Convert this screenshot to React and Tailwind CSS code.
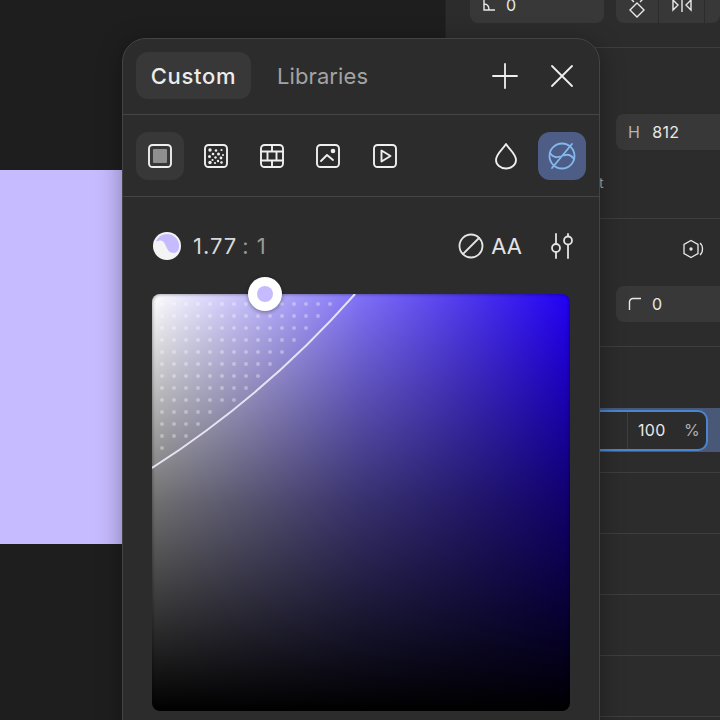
import React from 'react';

const FONT = { fontFamily: 'Inter, "Noto Sans", sans-serif' };

// quadratic contrast curve inside the colour field
const P0 = [0, 174];
const C = [114, 101];
const P2 = [203, 0];
const curveY = (x) => {
  let best = 0;
  let dist = 1e9;
  for (let t = 0; t <= 1; t += 0.005) {
    const cx = (1 - t) * (1 - t) * P0[0] + 2 * t * (1 - t) * C[0] + t * t * P2[0];
    const d = Math.abs(cx - x);
    if (d < dist) {
      dist = d;
      best = (1 - t) * (1 - t) * P0[1] + 2 * t * (1 - t) * C[1] + t * t * P2[1];
    }
  }
  return best;
};

const dots = [];
for (let y = 10; y < 170; y += 12) {
  for (let x = 10; x < 200; x += 12) {
    if (y < curveY(x) - 8) dots.push([x, y]);
  }
}

const Ico = ({ children, size = 24, vb = 24, stroke = '#efefef', width = 1.9 }) => (
  <svg width={size} height={size} viewBox={`0 0 ${vb} ${vb}`} fill="none" stroke={stroke} strokeWidth={width} strokeLinecap="round" strokeLinejoin="round">
    {children}
  </svg>
);

const ToolButton = ({ children, active }) => (
  <div className={`flex h-12 w-12 items-center justify-center rounded-xl ${active ? 'bg-[#383838]' : ''}`}>{children}</div>
);

const PropertyPanel = () => (
  <div className="flex h-[720px] w-[275px] shrink-0 flex-col border-l border-[#242424] bg-[#2c2c2c] text-[16px] tracking-[0.3px] text-[#e8e8e8]">
    <div className="flex h-[48px] shrink-0 gap-3 border-b border-[#3e3e3e] pl-[24px]">
      <div className="-mt-[13px] flex h-9 w-[134px] items-center gap-[9px] rounded-lg bg-[#383838] pl-3">
        <svg width="15" height="15" viewBox="0 0 15 15" fill="none" stroke="#e8e8e8" strokeWidth="1.4"><path d="M2 1v11h11M2 6c3 0 5 2 5 6" /></svg>
        <span>0</span>
      </div>
      <div className="-mt-[13px] flex h-9 flex-1 rounded-lg bg-[#383838]">
        <div className="flex w-[43px] items-center justify-center border-r border-[#2c2c2c] pt-1">
          <svg width="18" height="26" viewBox="0 0 18 26" fill="none" stroke="#e8e8e8" strokeWidth="1.4"><path d="M9 9l7 7-7 7-7-7zM3 5l3 3M15 5l-3 3" /></svg>
        </div>
        <div className="flex w-[46px] items-center justify-center border-r border-[#2c2c2c]">
          <svg width="20" height="16" viewBox="0 0 20 16" fill="none" stroke="#e8e8e8" strokeWidth="1.4"><path d="M10 1v14M1 3l5 5-5 5zM19 3l-5 5 5 5z" /></svg>
        </div>
      </div>
    </div>
    <div className="relative flex h-[171px] shrink-0 flex-col border-b border-[#3e3e3e] pl-[170px] pt-[66px]">
      <div className="flex h-9 w-[104px] items-center gap-[12px] rounded-l-lg bg-[#383838] pl-3">
        <span className="text-[#b4b4b4]">H</span>
        <span>812</span>
      </div>
      <div className="mt-[22px] -ml-[62px] w-[50px] text-right text-[14px] text-[#a8a8a8]">Hug t</div>
    </div>
    <div className="flex h-[128px] shrink-0 flex-col border-b border-[#3e3e3e] pl-[170px] pt-[19px]">
      <div className="flex h-6 justify-end pr-[15px]">
        <svg width="24" height="24" viewBox="0 0 24 24" fill="none" stroke="#e8e8e8" strokeWidth="1.3">
          <path d="M10 2.500l7 4v9l-7 4-7-4v-9z" />
          <circle cx="10" cy="11" r="1" fill="#e8e8e8" />
          <path d="M19 5c2 1.500 2.500 3.500 2.500 6s-.5 4.500-2.500 6" />
        </svg>
      </div>
      <div className="mt-[24px] flex h-9 w-[104px] items-center gap-[10px] rounded-l-lg bg-[#383838] pl-3">
        <svg width="14" height="14" viewBox="0 0 14 14" fill="none" stroke="#e8e8e8" strokeWidth="1.4"><path d="M1.500 13V5a3.500 3.500 0 0 1 3.500-3.500h8" /></svg>
        <span>0</span>
      </div>
    </div>
    <div className="flex h-[126px] shrink-0 flex-col border-b border-[#3e3e3e] pt-[61px]">
      <div className="flex h-11 items-center bg-[#4a5878] pr-3">
        <div className="flex h-[41px] flex-1 items-center rounded-r-[10px] border-2 border-[#4a86d0] bg-[#2c2c2c]">
          <div className="w-[180px] self-stretch border-r border-[#3e3e3e]" />
          <span className="ml-[10px] w-[47px]">100</span>
          <span className="-ml-px text-[#b0b0b0]">%</span>
        </div>
      </div>
    </div>
    <div className="h-[61px] shrink-0 border-b border-[#3e3e3e]" />
    <div className="h-[61px] shrink-0 border-b border-[#3e3e3e]" />
    <div className="h-[61px] shrink-0 border-b border-[#3e3e3e]" />
    <div className="h-[61px] shrink-0 border-b border-[#3e3e3e]" />
  </div>
);

const ColorPicker = () => (
  <div className="absolute left-[122px] top-[38px] flex h-[700px] w-[478px] flex-col rounded-t-[24px] border border-[#444] bg-[#2c2c2c] shadow-[0_4px_24px_rgba(0,0,0,0.35)]">
    <div className="flex h-[76px] shrink-0 items-center border-b border-[#454545] pb-[2px] pl-[13px] pr-[25px]">
      <div className="flex h-[47px] w-[115px] items-center justify-center rounded-xl bg-[#383838] text-[22px] font-medium leading-none tracking-[0.7px] text-[#ececec]">Custom</div>
      <div className="ml-[26px] text-[22px] leading-none tracking-[0.1px] text-[#a3a3a3]">Libraries</div>
      <div className="ml-auto flex items-center gap-[32px]">
        <Ico size={26} vb={26} width={1.8}><path d="M13 1v24M1 13h24" /></Ico>
        <Ico size={24} width={1.8}><path d="M2 2l20 20M22 2L2 22" /></Ico>
      </div>
    </div>
    <div className="flex h-[82px] shrink-0 items-center gap-[8px] border-b border-[#454545] pl-[13px] pr-[13px]">
      <ToolButton active>
        <Ico>
          <rect x="1" y="1" width="22" height="22" rx="3.500" />
          <rect x="5" y="5" width="14" height="14" rx="1" fill="#8f8f8f" stroke="none" />
        </Ico>
      </ToolButton>
      <ToolButton>
        <Ico>
          <rect x="1" y="1" width="22" height="22" rx="3.500" />
          <g fill="#efefef" stroke="none">
            <circle cx="6" cy="6" r="1.700" /><circle cx="12" cy="6.500" r="1.300" /><circle cx="17.500" cy="6" r="1.100" />
            <circle cx="9" cy="10" r="1.300" /><circle cx="14.500" cy="10" r="1.500" /><circle cx="19" cy="11" r="1" />
            <circle cx="5.500" cy="12.500" r="1.500" /><circle cx="11.500" cy="13.500" r="1.200" /><circle cx="17" cy="14" r="1.400" />
            <circle cx="8.500" cy="16" r="1.100" /><circle cx="14" cy="17" r="1.200" />
            <circle cx="6" cy="18.500" r="1.700" /><circle cx="11" cy="19" r="1.100" /><circle cx="17.500" cy="18.500" r="1.300" />
          </g>
        </Ico>
      </ToolButton>
      <ToolButton>
        <Ico>
          <rect x="1" y="1" width="22" height="22" rx="3.500" />
          <path d="M1 7.500h22M1 16.500h22M7.500 7.500v9M16.500 7.500v9M12 1v6.500M12 16.500V23" />
        </Ico>
      </ToolButton>
      <ToolButton>
        <Ico>
          <rect x="1" y="1" width="22" height="22" rx="3.500" />
          <path d="M5 17l6-6 6 5" />
          <circle cx="17" cy="7" r="2.300" fill="#efefef" stroke="none" />
        </Ico>
      </ToolButton>
      <div className="ml-px">
        <ToolButton>
          <Ico>
            <rect x="1" y="1" width="22" height="22" rx="3.500" />
            <path d="M8.500 6.500v11l9-5.500z" />
          </Ico>
        </ToolButton>
      </div>
      <div className="ml-auto flex items-center gap-[8px]">
        <ToolButton>
          <Ico size={28} vb={28} width={1.8}>
            <path d="M14 2C11 7 4 12 4 18a10 8.500 0 0 0 20 0c0-6-7-11-10-16z" />
          </Ico>
        </ToolButton>
        <div className="flex h-12 w-12 items-center justify-center rounded-xl bg-[#4d5d85]">
          <Ico size={30} vb={30} stroke="#84b8ee" width={1.8}>
            <circle cx="15" cy="15" r="12.500" />
            <path d="M3 12c2.500 3.500 6.500 5 10 3.500M27 18c-2.500-3.500-6.500-5-10-3.500M5 27L25 3" />
          </Ico>
        </div>
      </div>
    </div>
    <div className="flex h-[97px] shrink-0 items-start pl-[29px] pr-[24px] pt-[34px]">
      <svg width="30" height="30" viewBox="0 0 30 30">
        <circle cx="15" cy="15" r="14" fill="#f4f4f4" />
        <path d="M5 10.500C7 9 10 9 12 11.500C14 14 15 20 19 21.500C21.500 22.500 24 22 26 20A12 12 0 0 0 4 10z" fill="#c7bbff" />
      </svg>
      <div className="ml-[11px] flex h-[30px] items-center text-[22px] leading-none tracking-[1px] text-[#d9d9d9]">
        1.77<span className="ml-[5px] text-[#9a9a9a]">: 1</span>
      </div>
      <div className="ml-auto flex h-[30px] items-center">
        <Ico size={26} vb={26} stroke="#e4e4e4" width={1.8}><circle cx="13" cy="13" r="11.500" /><path d="M5 21L21 5" /></Ico>
        <span className="ml-[7px] text-[22px] leading-none text-[#e4e4e4]">AA</span>
        <div className="ml-[27px]">
          <Ico size={26} vb={26} stroke="#e4e4e4" width={1.8}>
            <path d="M7 1v9M7 19v6M19 1v2M19 12v13" />
            <circle cx="7" cy="15" r="4" />
            <circle cx="19" cy="7.500" r="4" />
          </Ico>
        </div>
      </div>
    </div>
    <div className="relative ml-[29px] h-[417px] w-[418px] shrink-0 rounded-lg bg-[linear-gradient(to_bottom,transparent,rgba(0,0,0,0.56)_50%,#000),linear-gradient(to_right,#fff,#7f70f8_50%,#4f38ee_75%,#2200f5)] shadow-[inset_0_0_3px_1px_rgba(0,0,0,0.3)]">
      <svg className="absolute inset-0" width="418" height="417" viewBox="0 0 418 417" fill="none">
        {dots.map(([x, y]) => (
          <circle key={`${x}-${y}`} cx={x} cy={y} r="2" fill="#fff" fillOpacity="0.33" />
        ))}
        <path d={`M${P0[0]} ${P0[1]}Q${C[0]} ${C[1]} ${P2[0]} ${P2[1]}`} stroke="#e6e2f2" strokeWidth="2" />
      </svg>
      <div className="absolute left-[96px] -top-[17px] flex h-[34px] w-[34px] items-center justify-center rounded-full bg-white shadow-[0_1px_4px_rgba(0,0,0,0.4)]">
        <div className="h-4 w-4 rounded-full bg-[#c7bbff]" />
      </div>
    </div>
  </div>
);

export default function App() {
  return (
    <div className="relative flex h-[720px] w-[720px] overflow-hidden bg-[#1e1e1e]" style={FONT}>
      <div className="h-full w-[445px] shrink-0 pt-[170px]">
        <div className="h-[374px] w-[200px] bg-[#c7bbff]" />
      </div>
      <PropertyPanel />
      <ColorPicker />
    </div>
  );
}
